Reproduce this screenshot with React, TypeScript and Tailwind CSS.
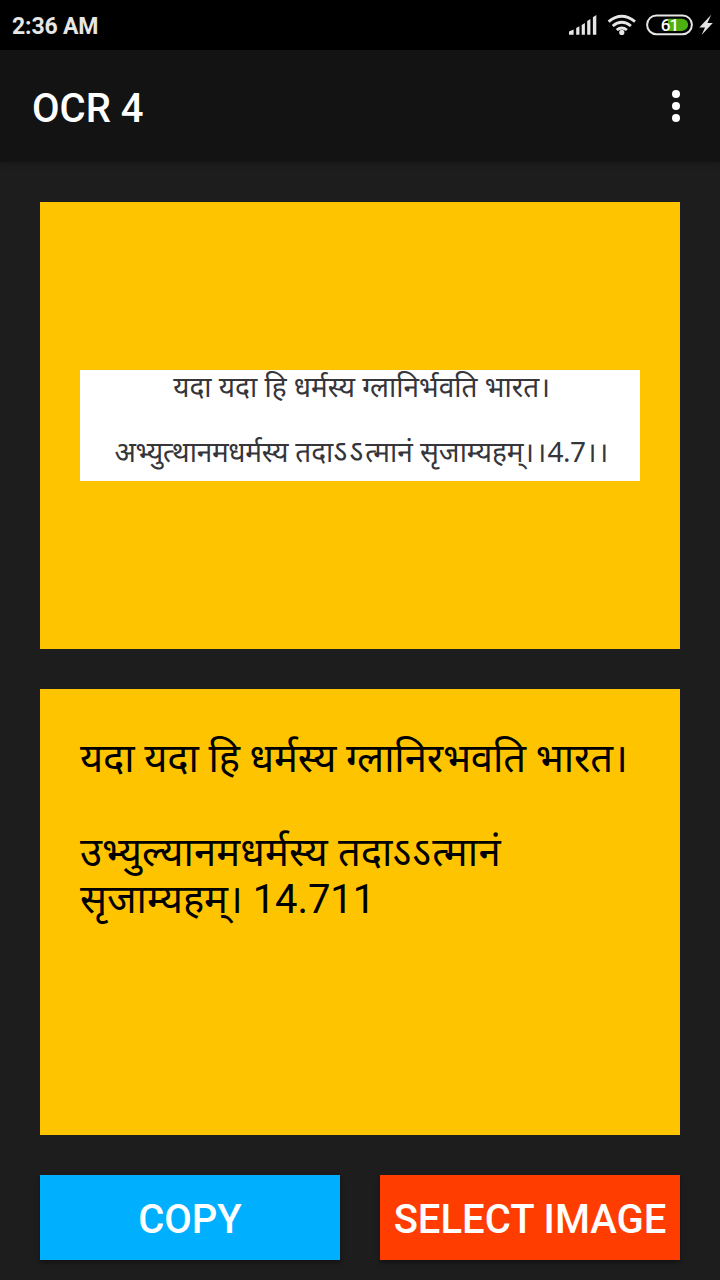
function StatusIcons() {
  return (
    <svg width="160" height="50" viewBox="560 0 160 50" aria-hidden="true">
      <g fill="#e6e6e6">
        <path d="M569 34.8v-3.2l4.6-2.2v5.4z" />
        <path d="M576.2 28l3.2-1.8v8.6h-3.2z" />
        <path d="M581.7 25l3.2-2v11.8h-3.2z" />
        <path d="M587.2 21l3.2-2v15.8h-3.2z" />
        <path d="M592.9 17.2l3.4-2.2v19.8h-3.4z" />
        <circle cx="621.8" cy="32.4" r="2.6" />
        <path d="M711.2 14.8l-11.9 12.6h5.7l-3.4 7.6 11.2-11.9h-5.4z" />
      </g>
      <g fill="none" stroke="#e6e6e6" strokeWidth="2.9">
        <path d="M608.6 21.7q13.2-10.8 26.4 0" />
        <path d="M612.7 26q9.1-7.4 18.2 0" />
        <path d="M616.7 30q5.1-4.2 10.2 0" />
      </g>
      <rect x="647.1" y="15.4" width="44.8" height="18.8" rx="9.4" fill="none" stroke="#e6e6e6" strokeWidth="2" />
      <path d="M668 18.7h14a6.1 6.1 0 0 1 0 12.2h-14z" fill="#4caf12" />
      <text x="660.8" y="31" fill="#fff" className="font-['Roboto',sans-serif] text-[17px] font-medium tracking-[-1px]">
        61
      </text>
    </svg>
  );
}

function Verse({ text, className }: { text: string; className: string }) {
  return <p className={`whitespace-nowrap ${className}`}>{text}</p>;
}

export default function App() {
  return (
    <div className="flex h-[1280px] w-[720px] flex-col overflow-hidden bg-[#1d1d1d] font-['Roboto','Noto_Sans',sans-serif]">
      <header className="flex h-[50px] shrink-0 items-center justify-between bg-black pl-3 text-[#e6e6e6]">
        <span className="pt-[3px] text-[23px] leading-none font-bold tracking-[-0.15px]">2:36 AM</span>
        <StatusIcons />
      </header>
      <div className="flex h-28 shrink-0 items-center justify-between bg-[#131313] pr-10 pl-8 shadow-[0_2px_6px_rgba(0,0,0,0.2)]">
        <h1 className="pt-1.5 text-[40px] leading-none font-medium text-white">OCR 4</h1>
        <button aria-label="More options" className="flex flex-col gap-1">
          <i className="size-2 rounded-full bg-white" />
          <i className="size-2 rounded-full bg-white" />
          <i className="size-2 rounded-full bg-white" />
        </button>
      </div>
      <main className="flex flex-col gap-10 px-10 pt-10">
        <section className="flex h-[447px] items-center bg-[#ffc400] px-10">
          <div className="flex h-[111px] w-full flex-col items-center bg-white font-['Noto_Sans',sans-serif] text-[28px] leading-[65px] text-[#35353a]">
            <Verse className="-mt-4 pl-[3px]" text="यदा यदा हि धर्मस्य ग्लानिर्भवति भारत।" />
            <p className="pl-1 whitespace-nowrap">
              <span className="tracking-[-0.3px]">अभ्युत्थानमधर्मस्य </span>
              तदा<span className="text-[30px] leading-none tracking-[2px]">ऽऽ</span>त्मानं{" "}
              <span className="tracking-[-0.1px]">सृजाम्यहम्</span>
              <span className="tracking-[1.5px]">।।</span>
              <span className="tracking-[-0.5px]">4.7</span>
              <span className="tracking-[1.3px]">।।</span>
            </p>
          </div>
        </section>
        <section className="h-[446px] bg-[#ffc400] px-10 pt-[46px] text-[40px] leading-[47px] text-black">
          <Verse className="tracking-[-0.17px]" text="यदा यदा हि धर्मस्य ग्लानिरभवति भारत।" />
          <br />
          <p className="whitespace-nowrap">
            <span className="tracking-[0.08px]">उभ्युल्यानमधर्मस्य तदा</span>
            <span className="tracking-[1.2px]">ऽऽ</span>
            <span className="tracking-[0.4px]">त्मानं</span>
          </p>
          <Verse className="tracking-[-0.1px]" text="सृजाम्यहम्। 14.711" />
        </section>
        <div className="flex gap-10 text-[40px] leading-none font-medium text-white">
          <button className="h-[85px] flex-1 bg-[#00b0ff] pt-1 shadow-[0_3px_5px_rgba(0,0,0,0.35)]">COPY</button>
          <button className="h-[85px] flex-1 bg-[#ff3d00] pt-1 whitespace-nowrap shadow-[0_3px_5px_rgba(0,0,0,0.35)]">
            SELECT IMAGE
          </button>
        </div>
      </main>
    </div>
  );
}
